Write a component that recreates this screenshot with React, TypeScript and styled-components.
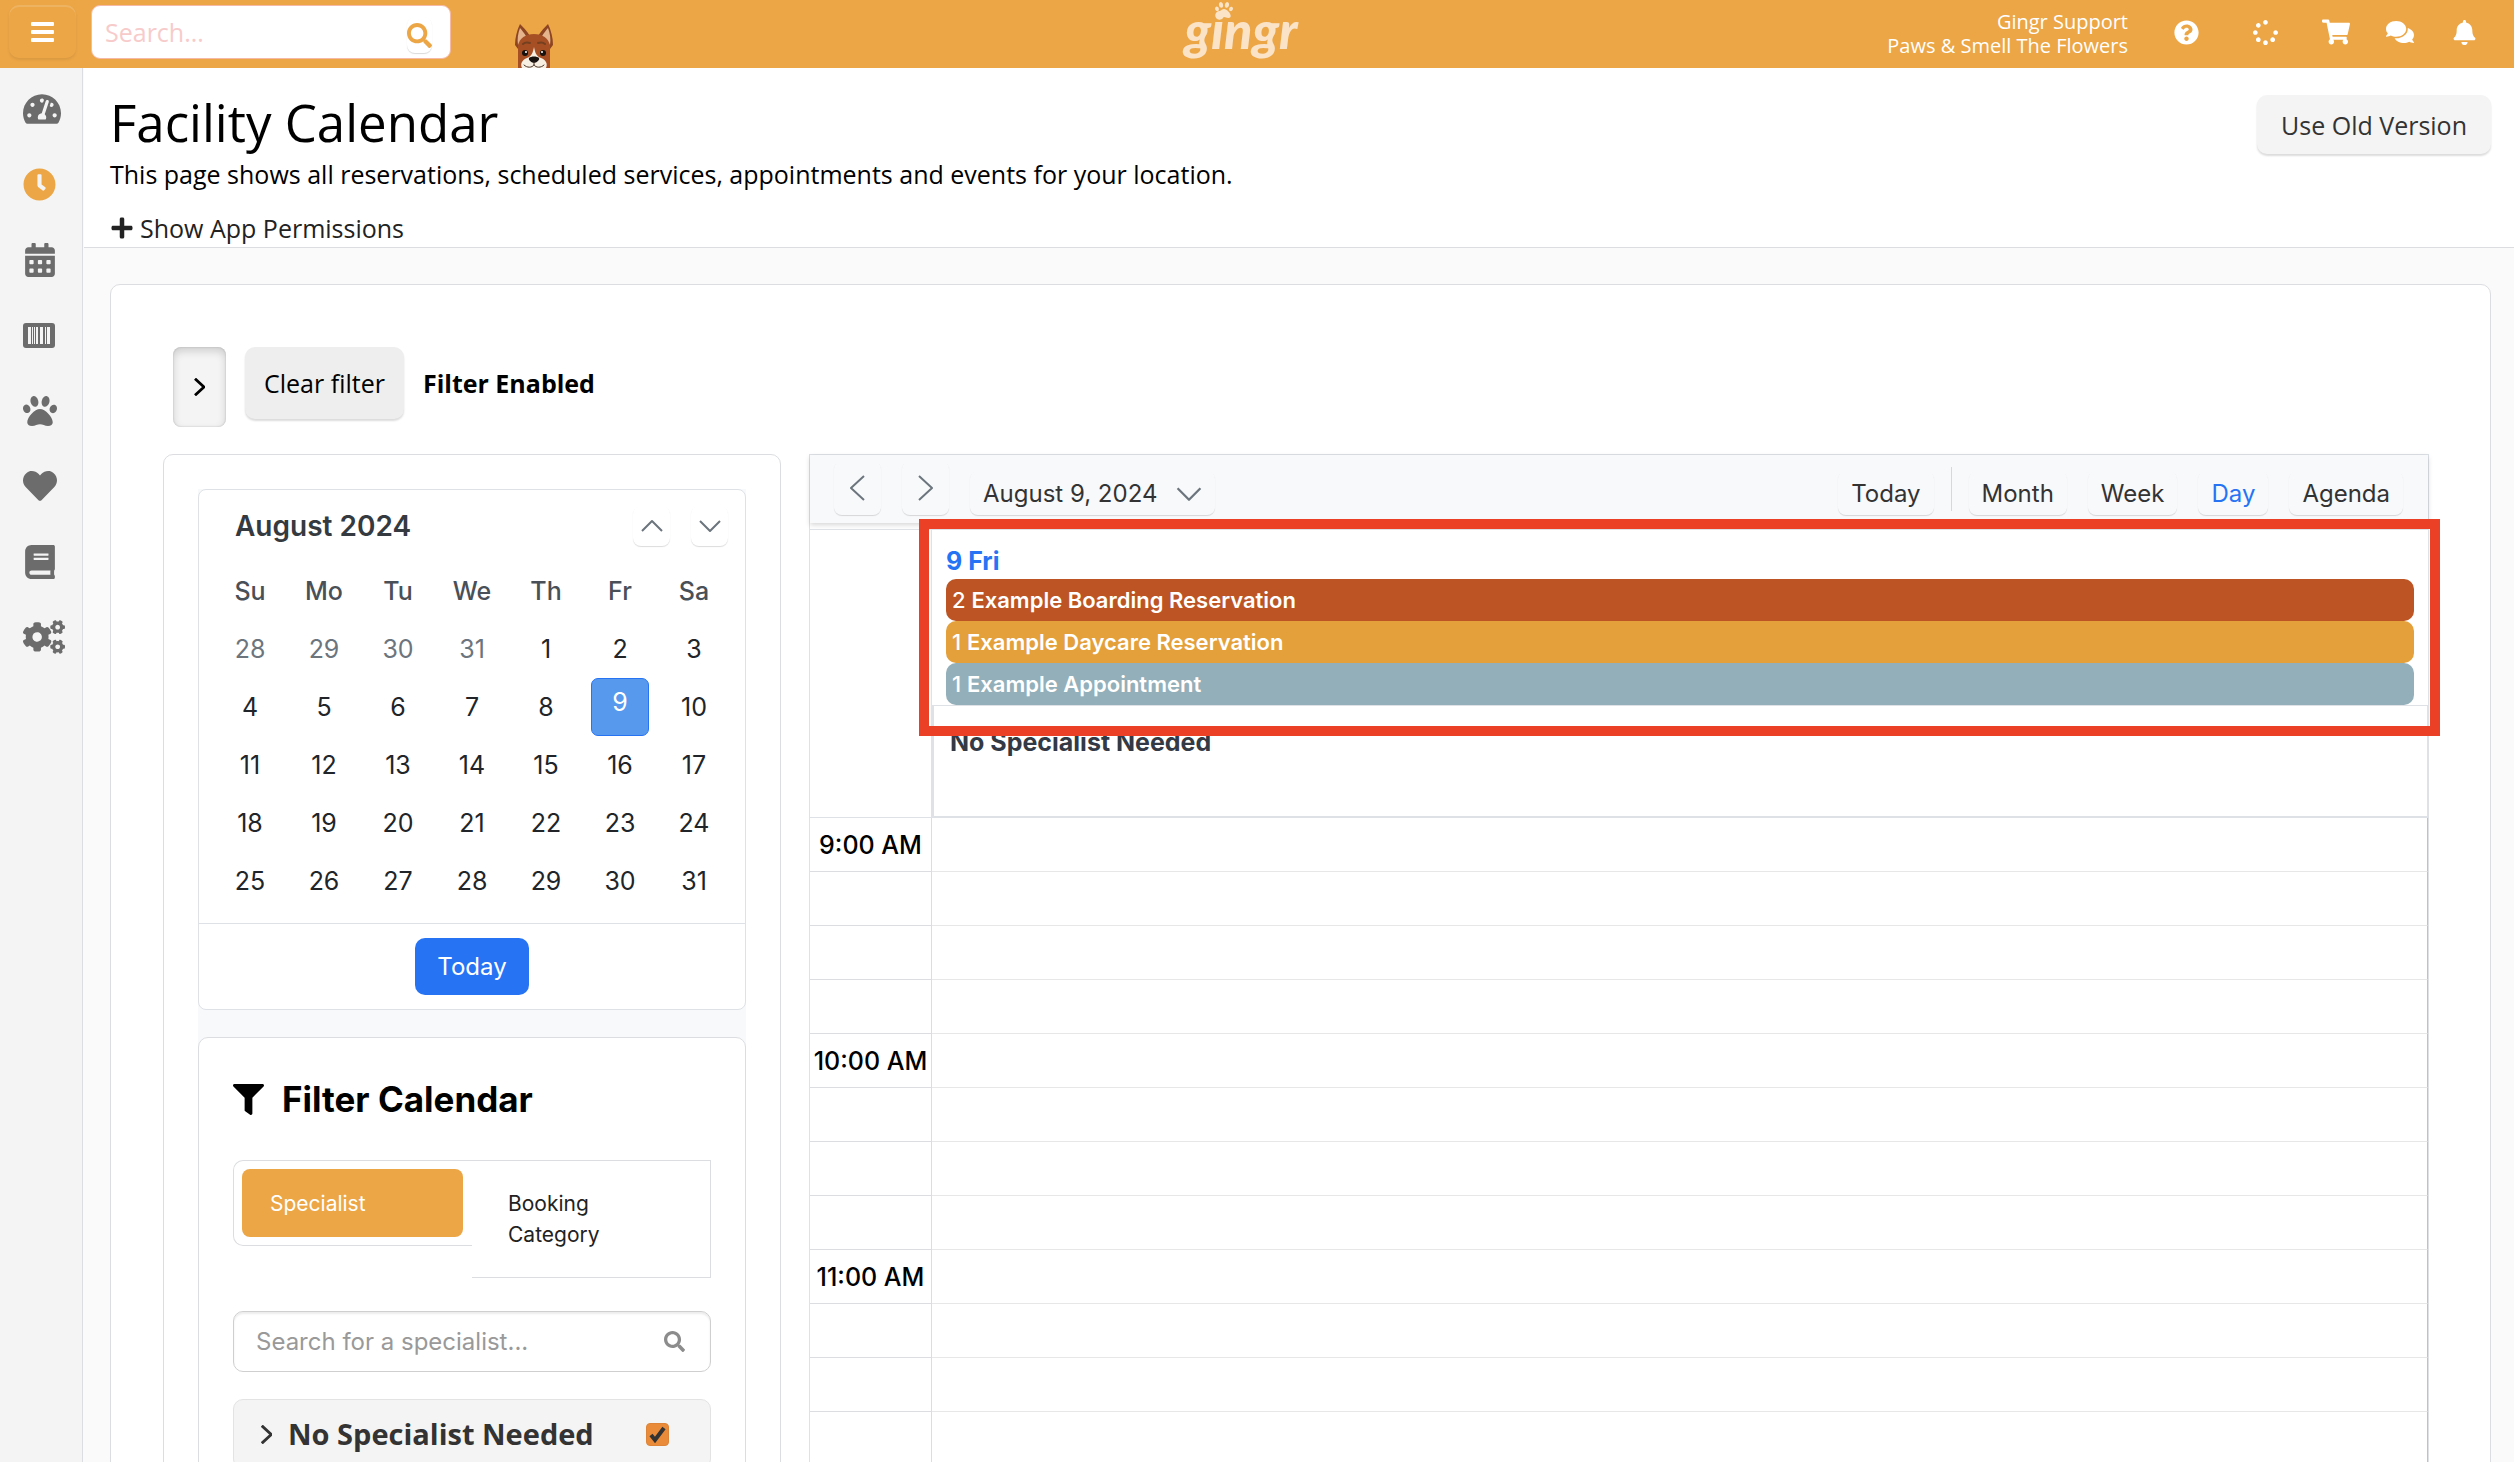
import React, { useState } from 'react';
import styled, { createGlobalStyle, css } from 'styled-components';
import {
  FaBell,
  FaBook,
  FaCalendarAlt,
  FaClock,
  FaCogs,
  FaComments,
  FaFilter,
  FaHeart,
  FaPaw,
  FaPlus,
  FaQuestionCircle,
  FaSearch,
  FaShoppingCart,
  FaSpinner,
  FaTachometerAlt,
} from 'react-icons/fa';

const brand = '#eca646';
const blue = '#2673f4';
const line = '#dcdde0';
const coolLine = '#dee2e6';
const sans = "'Open Sans', 'Noto Sans', sans-serif";
const ui = "Inter, 'Liberation Sans', sans-serif";

const GlobalStyle = createGlobalStyle`
  *, *::before, *::after { box-sizing: border-box; }
  body { margin: 0; background: #fafafa; color: #000; font: 400 25px/36px ${sans}; }
  button, input { font: inherit; color: inherit; margin: 0; }
  button { border: 0; background: none; padding: 0; cursor: pointer; }
  h1, h2, h3, p { margin: 0; font: inherit; }
  svg { display: block; flex: none; }
`;

/* ---------- shell ---------- */

const Shell = styled.div`
  display: grid;
  grid-template-columns: 84px minmax(0, 1fr);
  grid-template-rows: 68px minmax(0, 1fr);
  height: 100vh;
`;

const TopBar = styled.header`
  grid-column: 1 / -1;
  display: grid;
  grid-template-columns: minmax(0, 1fr) auto minmax(0, 1fr);
  background: ${brand};
  color: #fff;
`;

const TopLeft = styled.div`
  display: flex;
  align-items: flex-start;
  padding: 5px 0 0 9px;
`;

const MenuButton = styled.button`
  display: grid;
  place-items: center;
  width: 67px;
  height: 53px;
  margin-right: 15px;
  border-radius: 10px;
  box-shadow: inset 0 2px 0 rgba(255, 255, 255, 0.15), 0 2px 3px rgba(0, 0, 0, 0.08);
`;

const TopSearch = styled.form`
  display: flex;
  align-items: center;
  width: 360px;
  height: 54px;
  padding: 0 18px 0 13px;
  border: 1px solid #f6b9a6;
  border-radius: 9px;
  background: #fff;
`;

const TopSearchInput = styled.input`
  flex: 1;
  min-width: 0;
  padding: 0;
  border: 0;
  outline: 0;
  background: none;
  color: #333;
  &::placeholder { color: #f8cbcb; opacity: 1; }
`;

const TopSearchButton = styled.button`
  display: grid;
  place-items: center;
  height: 36px;
  margin-top: 6px;
  border-radius: 8px;
  color: ${brand};
  box-shadow: 0 1px 1px rgba(0, 0, 0, 0.15);
`;

const Mascot = styled.svg`
  margin: 18px 0 0 63px;
`;

const Logo = styled.a`
  position: relative;
  margin-right: 32px;
  color: #fae3c7;
  font: italic 900 52px/58px Lato, ${sans};
  text-decoration: none;
`;

const LogoPaw = styled(FaPaw)`
  position: absolute;
  top: 1px;
  left: 31px;
`;

const TopRight = styled.div`
  display: flex;
  align-items: center;
  justify-content: flex-end;
  padding: 0 18px 4px 0;
`;

const Account = styled.p`
  display: grid;
  margin-right: 18px;
  padding-top: 4px;
  font-size: 20px;
  line-height: 24px;
  text-align: right;
`;

const TopIcon = styled.button<{ $width: number }>`
  display: grid;
  place-items: center;
  width: ${(p) => p.$width}px;
  height: 50px;
`;

const SideNav = styled.nav`
  margin-right: 1px;
  padding-top: 15px;
  border-right: 1px solid ${line};
  background: #f4f4f4;
`;

const SideList = styled.ul`
  display: flex;
  flex-direction: column;
  justify-content: space-between;
  height: 580px;
  margin: 0;
  padding: 0;
  list-style: none;
`;

const SideLink = styled.a<{ $active?: boolean }>`
  display: flex;
  align-items: center;
  height: 52px;
  padding-left: 23px;
  color: ${(p) => (p.$active ? brand : '#6c6c6c')};
`;

const Main = styled.main`
  overflow-y: auto;
  scrollbar-width: none;
`;

/* ---------- page heading ---------- */

const PageHead = styled.section`
  display: flex;
  justify-content: space-between;
  align-items: flex-start;
  padding: 24px 23px 1px 26px;
  border-bottom: 1px solid ${line};
  background: #fff;
`;

const PageTitle = styled.h1`
  font-size: 51px;
  line-height: 60px;
`;

const PageText = styled.p`
  line-height: 44px;
`;

const PermissionsButton = styled.button`
  display: flex;
  align-items: center;
  gap: 6px;
  margin-top: 14px;
  color: #222;
`;

const softButton = css`
  border-radius: 10px;
  box-shadow: 0 2px 2px rgba(0, 0, 0, 0.14);
`;

const OldVersionButton = styled.button`
  ${softButton}
  height: 59px;
  margin-top: 3px;
  padding: 0 24px;
  background: #f4f4f4;
  color: #333;
`;

/* ---------- card ---------- */

const Card = styled.section`
  margin: 36px 23px 36px 26px;
  padding: 62px 61px 62px 52px;
  border: 1px solid ${line};
  border-radius: 10px;
  background: #fff;
`;

const FilterBar = styled.div`
  display: flex;
  align-items: flex-start;
  gap: 19px;
  padding-left: 10px;
`;

const ToggleButton = styled.button`
  display: grid;
  place-items: center;
  width: 53px;
  height: 80px;
  border-radius: 8px;
  background: #f4f4f4;
  box-shadow: inset 0 4px 8px rgba(0, 0, 0, 0.16), inset 0 0 2px rgba(0, 0, 0, 0.2);
`;

const ClearButton = styled.button`
  ${softButton}
  height: 72px;
  padding: 0 19px;
  background: #eee;
`;

const FilterState = styled.strong`
  line-height: 72px;
`;

const Columns = styled.div`
  display: flex;
  gap: 28px;
  margin-top: 27px;
`;

const SidePanel = styled.aside`
  flex: none;
  width: 618px;
  padding: 34px;
  border: 1px solid ${line};
  border-radius: 10px;
  font-family: ${ui};
`;

const PanelStack = styled.div`
  display: grid;
  gap: 27px;
  background: #f8f9fb;
`;

/* ---------- month picker ---------- */

const MiniCalendar = styled.section`
  border: 1px solid ${coolLine};
  border-radius: 8px;
  background: #fff;
`;

const MiniHead = styled.header`
  display: flex;
  align-items: center;
  gap: 21px;
  padding: 16px 17px 16px 36px;
`;

const MiniTitle = styled.h2`
  flex: 1;
  color: #343a40;
  font-size: 28px;
  font-weight: 600;
  line-height: 40px;
`;

const ghostButton = css`
  display: flex;
  align-items: center;
  justify-content: center;
  border-radius: 8px;
  box-shadow: 0 1px 1px rgba(0, 0, 0, 0.14);
`;

const MiniNav = styled.button`
  ${ghostButton}
  width: 37px;
  height: 40px;
`;

const MiniTable = styled.table`
  width: 518px;
  margin: 0 14px 13px;
  border-collapse: collapse;
  table-layout: fixed;
`;

const WeekDay = styled.th`
  height: 58px;
  padding: 0;
  color: #495057;
  font-weight: 500;
`;

const DayCell = styled.td`
  height: 58px;
  padding: 0;
`;

const DayButton = styled.button<{ $muted?: boolean; $selected?: boolean }>`
  display: block;
  width: 58px;
  height: 58px;
  margin: 0 auto;
  color: ${(p) => (p.$muted ? '#6c757d' : '#212529')};
  ${(p) =>
    p.$selected &&
    css`
      padding-bottom: 10px;
      border: 1px solid ${blue};
      border-radius: 7px;
      background: #5699ed;
      color: #fff;
    `}
`;

const MiniFoot = styled.footer`
  display: flex;
  justify-content: center;
  padding: 14px;
  border-top: 1px solid ${coolLine};
`;

const TodayButton = styled.button`
  height: 57px;
  padding: 0 22px;
  border-radius: 10px;
  background: ${blue};
  color: #fff;
  font-size: 24px;
`;

/* ---------- filter panel ---------- */

const FilterPanel = styled.section`
  padding: 39px 34px 34px;
  border: 1px solid ${line};
  border-radius: 10px;
  background: #fff;
`;

const FilterTitle = styled.h2`
  display: flex;
  align-items: center;
  gap: 18px;
  margin-bottom: 39px;
  font-size: 35px;
  font-weight: 700;
  line-height: 44px;
`;

const Tabs = styled.div`
  display: grid;
  grid-template-columns: 1fr 1fr;
  align-items: start;
  font-size: 21px;
  line-height: 31px;
`;

const ActiveTabFrame = styled.div`
  display: grid;
  padding: 8px 9px 8px 8px;
  border: 1px solid ${line};
  border-right: 0;
  border-radius: 10px 0 0 10px;
`;

const Tab = styled.button<{ $active?: boolean }>`
  text-align: left;
  ${(p) =>
    p.$active
      ? css`
          height: 68px;
          padding: 0 28px;
          border-radius: 8px;
          background: ${brand};
          color: #fff;
        `
      : css`
          padding: 27px 60px 27px 36px;
          border: 1px solid ${line};
          border-left: 0;
          color: #222;
        `}
`;

const SpecialistSearch = styled.label`
  display: flex;
  align-items: center;
  height: 61px;
  margin: 33px 0 27px;
  padding: 0 25px 0 22px;
  border: 1px solid #cfcfcf;
  border-radius: 10px;
  box-shadow: inset 0 2px 2px rgba(0, 0, 0, 0.08);
  color: #8c8c8c;
`;

const SpecialistInput = styled.input`
  flex: 1;
  min-width: 0;
  padding: 0;
  border: 0;
  outline: 0;
  background: none;
  color: #333;
  font-size: 24px;
  &::placeholder { color: #999; opacity: 1; }
`;

const GroupRow = styled.div`
  display: flex;
  align-items: center;
  gap: 16px;
  padding: 14px 41px 14px 27px;
  border: 1px solid #e3e3e3;
  border-radius: 10px;
  background: #f4f4f4;
  color: #333;
`;

const GroupLabel = styled.label`
  flex: 1;
  font: 700 29px/40px ${sans};
`;

const CheckBox = styled.span`
  display: grid;
  place-items: center;
  > * { grid-area: 1 / 1; }
  > svg { pointer-events: none; }
`;

const CheckInput = styled.input`
  appearance: none;
  width: 23px;
  height: 23px;
  border: 1px solid #dd8438;
  border-radius: 4px;
  background: #ea8b3a;
`;

/* ---------- scheduler ---------- */

const Scheduler = styled.section`
  flex: 1;
  min-width: 0;
  border: 1px solid ${coolLine};
  font-family: ${ui};
`;

const Toolbar = styled.header`
  display: flex;
  justify-content: space-between;
  height: 68px;
  margin-bottom: 6px;
  padding: 0 25px 8px 24px;
  background: #f8f9fb;
  box-shadow: 0 2px 5px rgba(0, 0, 0, 0.16);
  color: #333;
`;

const ToolGroup = styled.div`
  display: flex;
  align-items: flex-end;
  gap: 21px;
`;

const StepButton = styled.button`
  ${ghostButton}
  width: 47px;
  height: 54px;
`;

const ToolButton = styled.button<{ $active?: boolean }>`
  ${ghostButton}
  gap: 19px;
  height: 44px;
  padding: 2px 13px 0;
  font-size: 24px;
  color: ${(p) => (p.$active ? blue : '#333')};
`;

const Divider = styled.span`
  width: 1px;
  height: 44px;
  margin: 0 -4px 4px;
  background: #d5d9dd;
`;

const DayHead = styled.div`
  display: grid;
  grid-template-columns: 122px minmax(0, 1fr);
  border-top: 1px solid ${coolLine};
`;

const DayGutter = styled.div`
  border-right: 1px solid ${coolLine};
  border-bottom: 1px solid ${coolLine};
`;

const AllDay = styled.div`
  position: relative;
  padding: 13px 14px 0;
`;

const DayName = styled.h3`
  color: ${blue};
  font-weight: 700;
`;

const EventList = styled.ul`
  margin: 0;
  padding: 0;
  list-style: none;
`;

const EventBar = styled.li<{ $color: string }>`
  height: 42px;
  padding-left: 6px;
  border-radius: 10px;
  background: ${(p) => p.$color};
  color: #fff;
  font-size: 22px;
  font-weight: 500;
  line-height: 42px;
  > b { font-weight: 600; }
`;

const Highlight = styled.div`
  position: absolute;
  z-index: 1;
  inset: -11px -12px -31px -13px;
  border: 10px solid #eb4025;
  pointer-events: none;
`;

const ResourceHead = styled.div`
  height: 113px;
  padding: 18px 16px;
  border: 2px solid ${coolLine};
  border-width: 1px 1px 2px 2px;
  color: #343a45;
  font-weight: 700;
`;

const TimeGrid = styled.table`
  width: 100%;
  border-collapse: separate;
  border-spacing: 0;
  table-layout: fixed;
`;

const TimeCell = styled.th`
  width: 122px;
  height: 54px;
  padding: 0;
  border-right: 1px solid ${line};
  border-bottom: 1px solid ${line};
  font-weight: 500;
  white-space: nowrap;
`;

const SlotCell = styled.td`
  padding: 0;
  border-right: 1px solid #bfc0cb;
  border-bottom: 1px solid #e7e7e7;
`;

/* ---------- drawings ---------- */

type Direction = 'left' | 'right' | 'up' | 'down';

const chevronPoints: Record<Direction, string> = {
  left: '14,1 1,13 14,25',
  right: '1,1 14,13 1,25',
  up: '1,12 11,2 21,12',
  down: '1,2 11,12 21,2',
};

function Chevron({ to, width, height, color = '#6c757d', stroke = 2 }: {
  to: Direction;
  width: number;
  height: number;
  color?: string;
  stroke?: number;
}) {
  const box = to === 'left' || to === 'right' ? '0 0 15 26' : '0 0 22 14';
  return (
    <svg width={width} height={height} viewBox={box} fill="none" stroke={color} strokeWidth={stroke} strokeLinejoin="round" aria-hidden="true">
      <polyline points={chevronPoints[to]} />
    </svg>
  );
}

function BarsIcon() {
  return (
    <svg width="23" height="20" viewBox="0 0 23 20" fill="#fff" aria-hidden="true">
      <rect width="23" height="4" rx="1" />
      <rect y="8" width="23" height="4" rx="1" />
      <rect y="16" width="23" height="4" rx="1" />
    </svg>
  );
}

function BarcodeIcon() {
  return (
    <svg width="32" height="25" viewBox="0 0 32 25" fill="#6c6c6c" aria-hidden="true">
      <rect width="32" height="25" rx="3" />
      <g fill="#f4f4f4">
        <rect x="5" y="4" width="3" height="17" />
        <rect x="9" y="4" width="1" height="17" />
        <rect x="11" y="4" width="1" height="17" />
        <rect x="13" y="4" width="2" height="17" />
        <rect x="17" y="4" width="3" height="17" />
        <rect x="22" y="4" width="1" height="17" />
        <rect x="24" y="4" width="3" height="17" />
      </g>
    </svg>
  );
}

function DogMascot() {
  return (
    <Mascot width="40" height="45" viewBox="0 0 40 45" aria-hidden="true">
      <path d="M6 1C3 7 1 15 1 22l3 4 12-13C13 8 9 4 6 1zM34 1c3 6 5 14 5 21l-3 4-12-13c3-5 7-9 10-12z" fill="#8d4522" />
      <path d="M6 5c-2 5-3 11-2 17l8-9C10 10 8 7 6 5zM34 5c2 5 3 11 2 17l-8-9c2-3 4-6 6-8z" fill="#e5b38c" />
      <path d="M4 45V23c1-8 8-12 16-12s15 4 16 12v22z" fill="#a64f24" />
      <path d="M20 24c-1 5-2 9-7 11-5 2-7 6-5 10h24c2-4 0-8-5-10-5-2-6-6-7-11z" fill="#f8efe3" />
      <path d="M9 21c2-2 4-2 7-1M31 21c-2-2-4-2-7-1" stroke="#74401f" strokeWidth="2" fill="none" strokeLinecap="round" />
      <ellipse cx="11" cy="30" rx="3" ry="3" fill="#17120f" />
      <ellipse cx="29" cy="30" rx="3" ry="3" fill="#17120f" />
      <circle cx="12" cy="29" r="1" fill="#fff" />
      <circle cx="28" cy="29" r="1" fill="#fff" />
      <path d="M15 35c2-2 8-2 10 0 1 2-3 5-5 5s-6-3-5-5z" fill="#17120f" />
      <path d="M20 39v3M20 42c-2 3-7 3-10 0M20 42c2 3 7 3 10 0" stroke="#4a3428" strokeWidth="1" fill="none" strokeLinecap="round" />
    </Mascot>
  );
}

function CheckMark() {
  return (
    <svg width="17" height="17" viewBox="0 0 17 17" fill="none" stroke="#333" strokeWidth="4" aria-hidden="true">
      <polyline points="2,9 6,14 15,2" />
    </svg>
  );
}

/* ---------- data ---------- */

const sideItems = [
  { label: 'Dashboard', icon: <FaTachometerAlt size={38} /> },
  { label: 'Time clock', icon: <FaClock size={33} />, active: true },
  { label: 'Calendar', icon: <FaCalendarAlt size={34} /> },
  { label: 'Point of sale', icon: <BarcodeIcon /> },
  { label: 'Animals', icon: <FaPaw size={34} /> },
  { label: 'Favorites', icon: <FaHeart size={34} /> },
  { label: 'Reports', icon: <FaBook size={34} /> },
  { label: 'Settings', icon: <FaCogs size={42} /> },
];

const topItems = [
  { label: 'Help', width: 80, icon: <FaQuestionCircle size={25} /> },
  { label: 'Loading', width: 78, icon: <FaSpinner size={25} /> },
  { label: 'Cart', width: 64, icon: <FaShoppingCart size={28} /> },
  { label: 'Messages', width: 64, icon: <FaComments size={28} /> },
  { label: 'Notifications', width: 64, icon: <FaBell size={25} /> },
];

const weekDays = ['Su', 'Mo', 'Tu', 'We', 'Th', 'Fr', 'Sa'];

const weeks = [
  [28, 29, 30, 31, 1, 2, 3],
  [4, 5, 6, 7, 8, 9, 10],
  [11, 12, 13, 14, 15, 16, 17],
  [18, 19, 20, 21, 22, 23, 24],
  [25, 26, 27, 28, 29, 30, 31],
];

const events = [
  { count: 2, name: 'Example Boarding Reservation', color: '#bc5423' },
  { count: 1, name: 'Example Daycare Reservation', color: '#e4a03a' },
  { count: 1, name: 'Example Appointment', color: '#93afb9' },
];

const views = ['Month', 'Week', 'Day', 'Agenda'];
const hours = ['9:00 AM', '10:00 AM', '11:00 AM'];
const slots = hours.flatMap((hour) => [hour, '', '', '']);

/* ---------- page ---------- */

function MonthPicker() {
  return (
    <MiniCalendar aria-label="Month picker">
      <MiniHead>
        <MiniTitle>August 2024</MiniTitle>
        <MiniNav aria-label="Previous month"><Chevron to="up" width={22} height={14} /></MiniNav>
        <MiniNav aria-label="Next month"><Chevron to="down" width={22} height={14} /></MiniNav>
      </MiniHead>
      <MiniTable>
        <thead>
          <tr>{weekDays.map((d) => <WeekDay key={d} scope="col">{d}</WeekDay>)}</tr>
        </thead>
        <tbody>
          {weeks.map((week, row) => (
            <tr key={row}>
              {week.map((day) => (
                <DayCell key={day}>
                  <DayButton $muted={row === 0 && day > 20} $selected={day === 9}>{day}</DayButton>
                </DayCell>
              ))}
            </tr>
          ))}
        </tbody>
      </MiniTable>
      <MiniFoot>
        <TodayButton>Today</TodayButton>
      </MiniFoot>
    </MiniCalendar>
  );
}

function CalendarFilter() {
  const [checked, setChecked] = useState(true);
  return (
    <FilterPanel aria-label="Filter Calendar">
      <FilterTitle><FaFilter size={31} />Filter Calendar</FilterTitle>
      <Tabs>
        <ActiveTabFrame>
          <Tab $active>Specialist</Tab>
        </ActiveTabFrame>
        <Tab>Booking Category</Tab>
      </Tabs>
      <SpecialistSearch>
        <SpecialistInput type="text" placeholder="Search for a specialist..." aria-label="Search for a specialist" />
        <FaSearch size={21} />
      </SpecialistSearch>
      <GroupRow>
        <Chevron to="right" width={11} height={19} color="#333" stroke={4} />
        <GroupLabel htmlFor="no-specialist">No Specialist Needed</GroupLabel>
        <CheckBox>
          <CheckInput id="no-specialist" type="checkbox" checked={checked} onChange={() => setChecked(!checked)} />
          {checked && <CheckMark />}
        </CheckBox>
      </GroupRow>
    </FilterPanel>
  );
}

function DayScheduler() {
  return (
    <Scheduler aria-label="Schedule">
      <Toolbar>
        <ToolGroup>
          <StepButton aria-label="Previous day"><Chevron to="left" width={15} height={26} /></StepButton>
          <StepButton aria-label="Next day"><Chevron to="right" width={15} height={26} /></StepButton>
          <ToolButton>August 9, 2024<Chevron to="down" width={26} height={16} /></ToolButton>
        </ToolGroup>
        <ToolGroup>
          <ToolButton>Today</ToolButton>
          <Divider />
          {views.map((view) => <ToolButton key={view} $active={view === 'Day'}>{view}</ToolButton>)}
        </ToolGroup>
      </Toolbar>
      <DayHead>
        <DayGutter />
        <div>
          <AllDay>
            <DayName>9 Fri</DayName>
            <EventList>
              {events.map((e) => (
                <EventBar key={e.name} $color={e.color}>{e.count} <b>{e.name}</b></EventBar>
              ))}
            </EventList>
            <Highlight />
          </AllDay>
          <ResourceHead>No Specialist Needed</ResourceHead>
        </div>
      </DayHead>
      <TimeGrid>
        <tbody>
          {slots.map((label, i) => (
            <tr key={i}>
              <TimeCell scope="row">{label}</TimeCell>
              <SlotCell />
            </tr>
          ))}
        </tbody>
      </TimeGrid>
    </Scheduler>
  );
}

export default function App() {
  return (
    <>
      <GlobalStyle />
      <Shell>
        <TopBar>
          <TopLeft>
            <MenuButton aria-label="Menu"><BarsIcon /></MenuButton>
            <TopSearch>
              <TopSearchInput type="text" placeholder="Search..." aria-label="Search" />
              <TopSearchButton type="button" aria-label="Run search"><FaSearch size={25} /></TopSearchButton>
            </TopSearch>
            <DogMascot />
          </TopLeft>
          <Logo href="#">gingr<LogoPaw size={18} /></Logo>
          <TopRight>
            <Account>
              <span>Gingr Support</span>
              <span>Paws &amp; Smell The Flowers</span>
            </Account>
            {topItems.map((item) => (
              <TopIcon key={item.label} $width={item.width} aria-label={item.label}>{item.icon}</TopIcon>
            ))}
          </TopRight>
        </TopBar>
        <SideNav aria-label="Main">
          <SideList>
            {sideItems.map((item) => (
              <li key={item.label}>
                <SideLink href="#" $active={item.active} aria-label={item.label}>{item.icon}</SideLink>
              </li>
            ))}
          </SideList>
        </SideNav>
        <Main>
          <PageHead>
            <div>
              <PageTitle>Facility Calendar</PageTitle>
              <PageText>This page shows all reservations, scheduled services, appointments and events for your location.</PageText>
              <PermissionsButton><FaPlus size={24} />Show App Permissions</PermissionsButton>
            </div>
            <OldVersionButton>Use Old Version</OldVersionButton>
          </PageHead>
          <Card>
            <FilterBar>
              <ToggleButton aria-label="Toggle panel"><Chevron to="right" width={11} height={18} color="#000" stroke={4} /></ToggleButton>
              <ClearButton>Clear filter</ClearButton>
              <FilterState>Filter Enabled</FilterState>
            </FilterBar>
            <Columns>
              <SidePanel>
                <PanelStack>
                  <MonthPicker />
                  <CalendarFilter />
                </PanelStack>
              </SidePanel>
              <DayScheduler />
            </Columns>
          </Card>
        </Main>
      </Shell>
    </>
  );
}
